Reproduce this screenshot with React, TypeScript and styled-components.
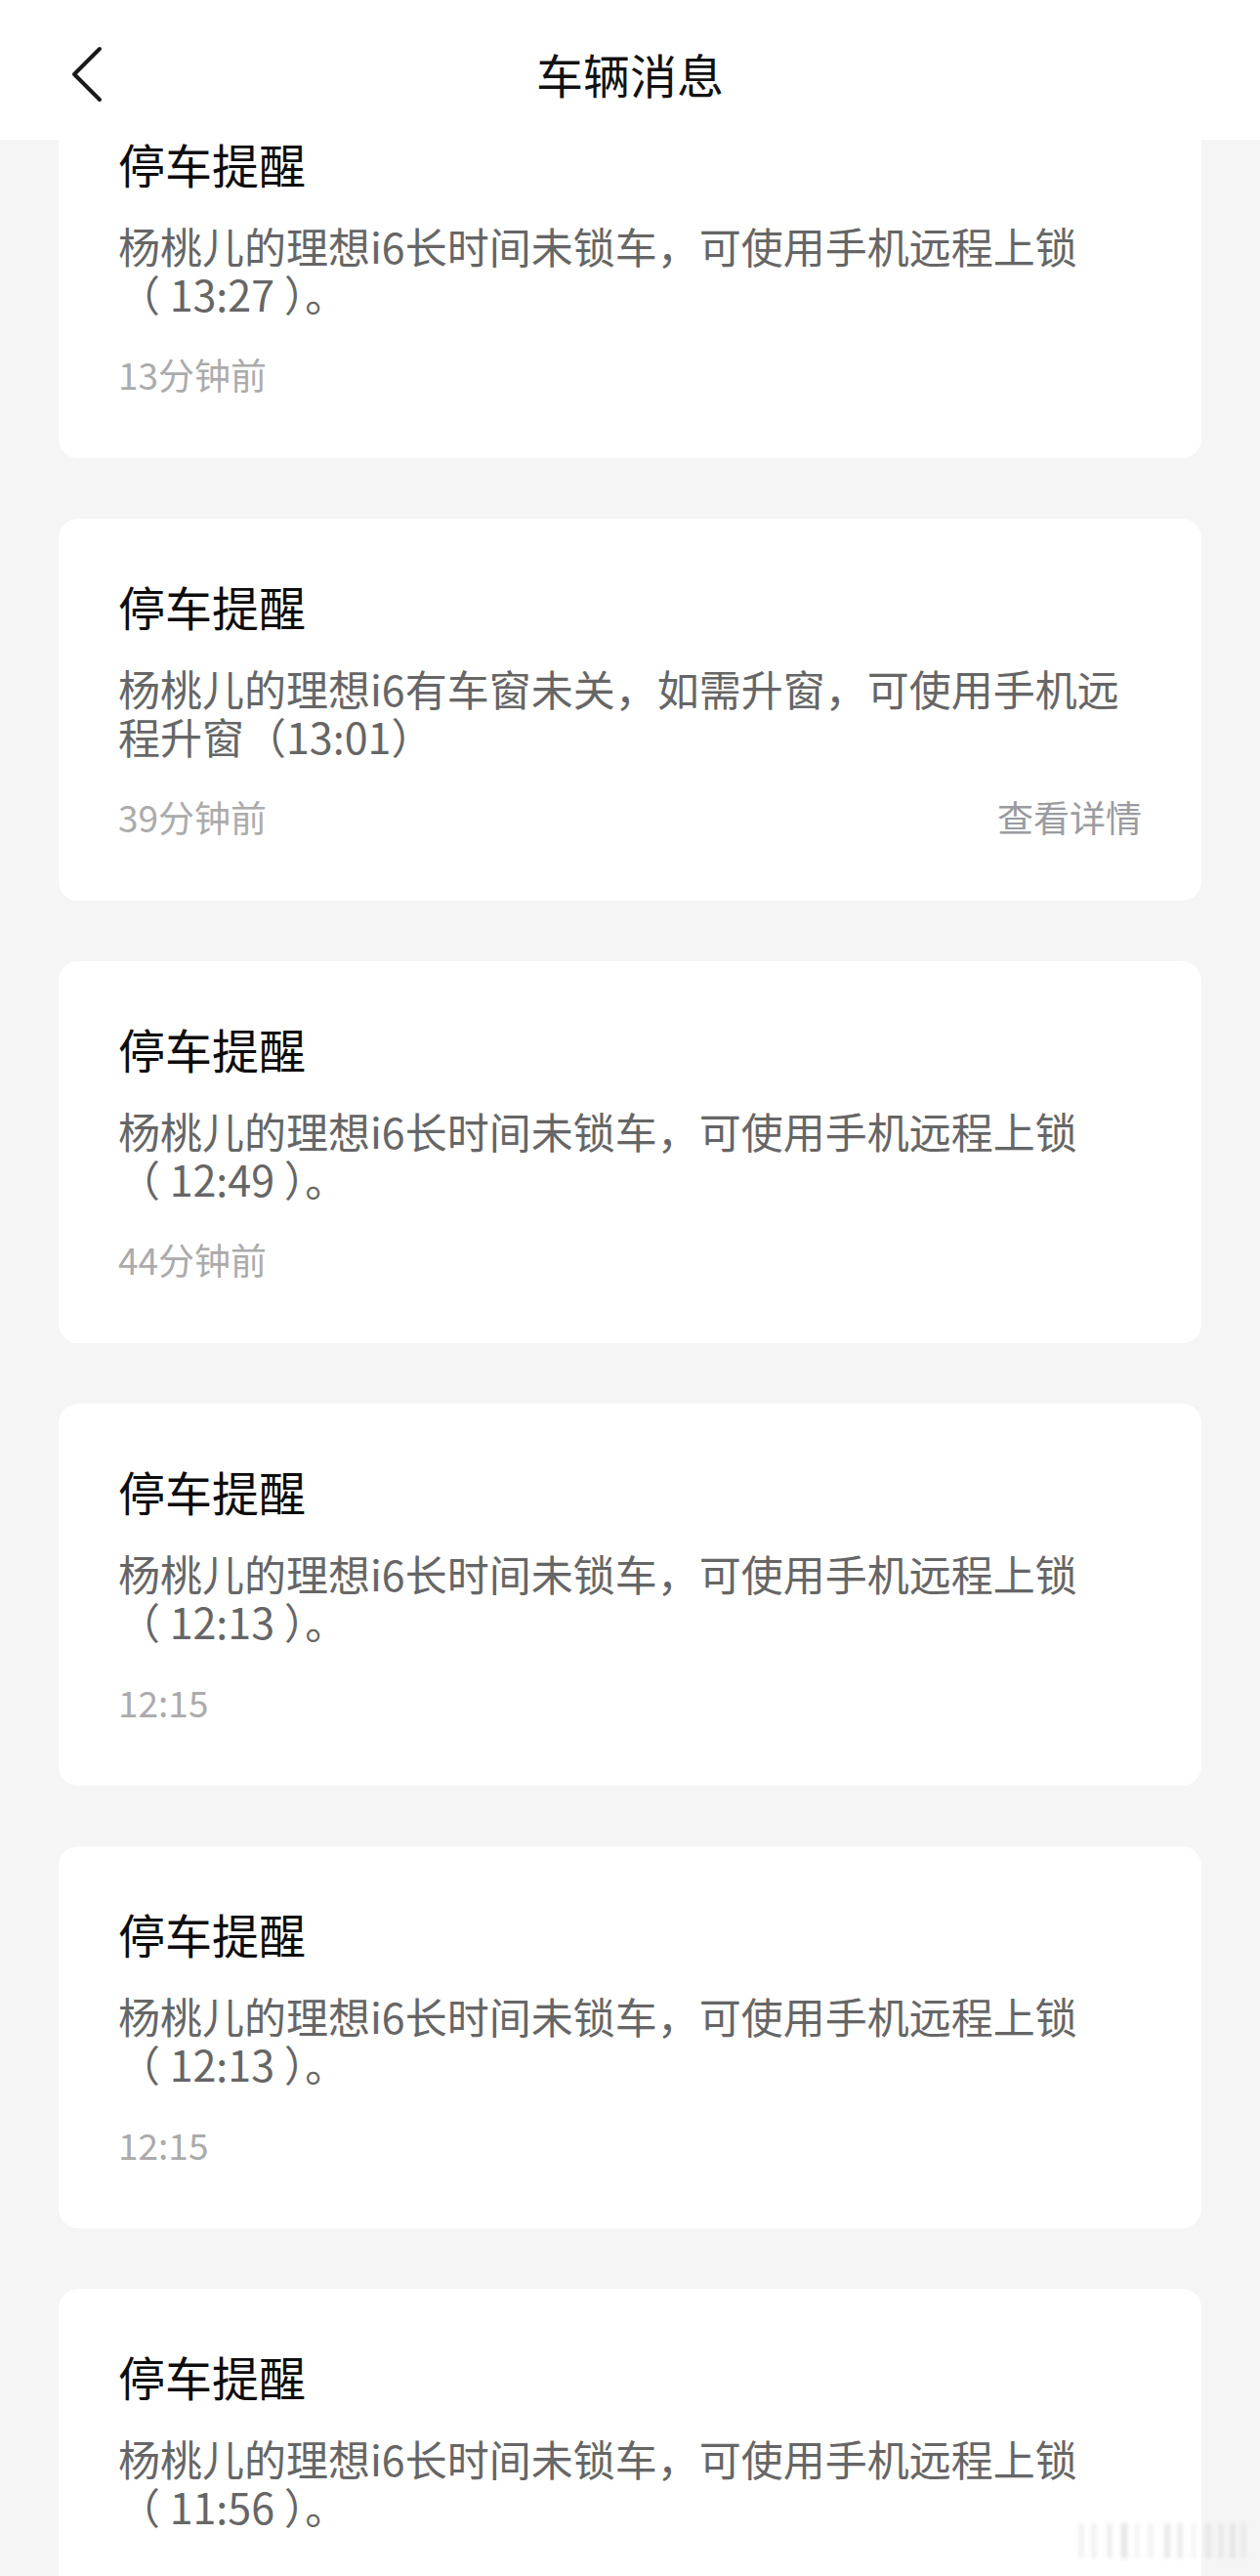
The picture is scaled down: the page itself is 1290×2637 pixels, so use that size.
import React from 'react'
import styled, { createGlobalStyle } from 'styled-components'

const GlobalStyle = createGlobalStyle`
  html, body {
    margin: 0;
    padding: 0;
    background: #f5f5f5;
  }
  body {
    font-family: "Noto Sans CJK SC", "Noto Sans", sans-serif;
    -webkit-font-smoothing: antialiased;
  }
`

interface Message {
    title: string
    body: string
    time?: string
    detail?: boolean
}

// the stamp in brackets keeps its padding with no-break spaces so it never splits
const stamp = (t: string) => `（\u00a0${t}\u00a0）。`

// the last card is cut off by the screen edge, its footer is out of view
const messages: Message[] = [
    { title: '停车提醒', body: '杨桃儿的理想i6长时间未锁车，可使用手机远程上锁' + stamp('13:27'), time: '13分钟前' },
    { title: '停车提醒', body: '杨桃儿的理想i6有车窗未关，如需升窗，可使用手机远程升窗（13:01）', time: '39分钟前', detail: true },
    { title: '停车提醒', body: '杨桃儿的理想i6长时间未锁车，可使用手机远程上锁' + stamp('12:49'), time: '44分钟前' },
    { title: '停车提醒', body: '杨桃儿的理想i6长时间未锁车，可使用手机远程上锁' + stamp('12:13'), time: '12:15' },
    { title: '停车提醒', body: '杨桃儿的理想i6长时间未锁车，可使用手机远程上锁' + stamp('12:13'), time: '12:15' },
    { title: '停车提醒', body: '杨桃儿的理想i6长时间未锁车，可使用手机远程上锁' + stamp('11:56') },
]

const Screen = styled.div`
  position: relative;
  height: 100vh;
  overflow: hidden;
  background: #f5f5f5;
`

const NavBar = styled.header`
  position: absolute;
  top: 0;
  left: 0;
  right: 0;
  z-index: 2;
  height: 143px;
  background: #ffffff;
  display: grid;
  grid-template-columns: 1fr auto 1fr;
  align-items: center;
`

const BackButton = styled.button`
  justify-self: start;
  margin-left: 72px;
  margin-top: 8px;
  padding: 0;
  border: none;
  background: transparent;
  display: flex;
  cursor: pointer;
`

const NavTitle = styled.h1`
  margin: 0;
  margin-top: 6px;
  font-size: 48px;
  font-weight: 400;
  line-height: 56px;
  color: #111111;
`

const List = styled.main`
  display: flex;
  flex-direction: column;
  gap: 62px;
  padding: 78px 60px 0;
`

const Card = styled.section`
  background: #ffffff;
  border-radius: 20px;
  padding: 61px 61px 64px;
`

const CardTitle = styled.h2`
  margin: 0;
  font-size: 48px;
  font-weight: 400;
  line-height: 56px;
  color: #0d0d0d;
`

const CardBody = styled.p`
  margin: 32px 0 0;
  font-size: 43px;
  line-height: 49px;
  color: #666666;
`

const CardFooter = styled.div`
  margin-top: 36px;
  min-height: 44px;
  display: flex;
  justify-content: space-between;
  align-items: center;
  font-size: 37px;
  line-height: 44px;
`

const Time = styled.span`
  color: #ababab;
`

const DetailLink = styled.a`
  color: #9a9ba0;
  text-decoration: none;
`

const Watermark = styled.svg`
  position: absolute;
  right: 10px;
  bottom: 14px;
  opacity: 0.9;
`

function BackIcon() {
    return (
        <svg width="34" height="58" viewBox="0 0 34 58">
            <polyline points="30,3 4,29 30,55" fill="none" stroke="#1a1a1a" strokeWidth="4" strokeLinecap="round" strokeLinejoin="round" />
        </svg>
    )
}

const bars = [0, 14, 30, 44, 58, 72, 88, 102, 116, 130, 144, 156, 166]

export default function App() {
    return (
        <>
            <GlobalStyle />
            <Screen>
                <NavBar>
                    <BackButton aria-label="返回">
                        <BackIcon />
                    </BackButton>
                    <NavTitle>车辆消息</NavTitle>
                    <span />
                </NavBar>
                <List>
                    {messages.map((m, i) => (
                        <Card key={i}>
                            <CardTitle>{m.title}</CardTitle>
                            <CardBody>{m.body}</CardBody>
                            <CardFooter>
                                {m.time ? <Time>{m.time}</Time> : null}
                                {m.detail ? <DetailLink href="#">查看详情</DetailLink> : null}
                            </CardFooter>
                        </Card>
                    ))}
                </List>
                <Watermark width="180" height="44" viewBox="0 0 180 44">
                    <defs>
                        <filter id="wm-blur">
                            <feGaussianBlur stdDeviation="2" />
                        </filter>
                    </defs>
                    <g filter="url(#wm-blur)" fill="#d4d4d4">
                        {bars.map((x, i) => (
                            <rect key={i} x={x + 4} y={4} width={i % 3 === 0 ? 6 : 4} height={36} opacity={0.35 + (i % 4) * 0.12} />
                        ))}
                    </g>
                </Watermark>
            </Screen>
        </>
    )
}
